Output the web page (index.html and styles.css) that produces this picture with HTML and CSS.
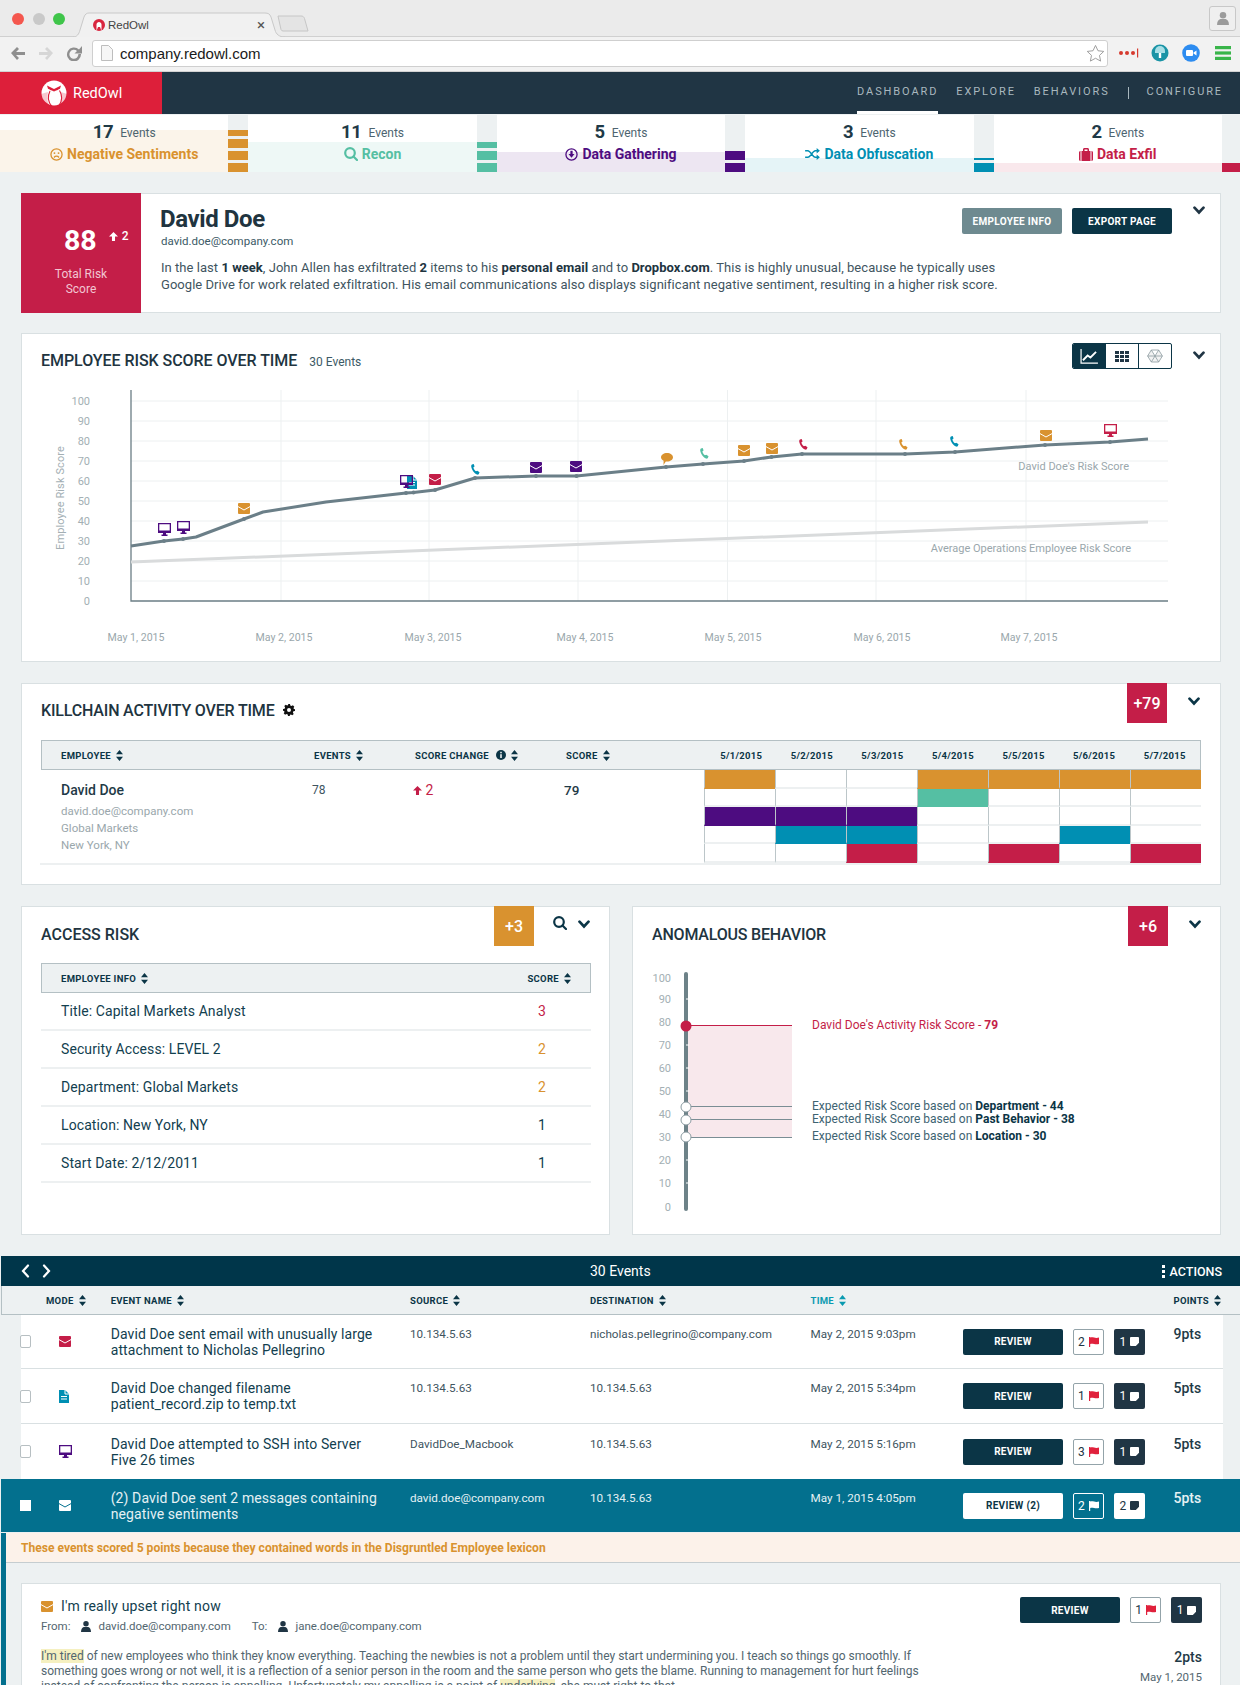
FILE: index.html
```html
<!DOCTYPE html>
<html lang="en">
<head>
<meta charset="utf-8">
<title>RedOwl</title>
<link rel="stylesheet" href="styles.css">
</head>
<body>
<svg class="defs" width="0" height="0" aria-hidden="true">
  <symbol id="i-mail" viewBox="0 0 12 11"><path d="M1 0h10a1 1 0 0 1 1 1v9a1 1 0 0 1-1 1H1a1 1 0 0 1-1-1V1a1 1 0 0 1 1-1z"/><path class="cut" d="M0 3.6l6 3.4 6-3.4"/></symbol>
  <symbol id="i-monitor" viewBox="0 0 13 13"><path d="M0 0h13v10H8v1.5h1.5V13h-6v-1.5H5V10H0zM1.3 1.3v6.2h10.4V1.3z"/></symbol>
  <symbol id="i-phone" viewBox="0 0 10 12"><path d="M1 .5L3 0l1 2.6-1.3 1c.2 1.700 1.300 3.500 2.800 4.400L7 7.300 9.500 9l-.8 2c-.4.6-1.200 1-2 .6C3.500 10.200.6 6.200.2 2.400.2 1.500.4.900 1 .5z"/></symbol>
  <symbol id="i-doc" viewBox="0 0 10 13"><path d="M0 0h6l4 4v9H0zM2 6v1h6V6zm0 2.500v1h6v-1z" fill-rule="evenodd"/><path class="cut" d="M6 0v4h4"/></symbol>
  <symbol id="i-bubble" viewBox="0 0 12 12"><path d="M6 0c3.300 0 6 1.900 6 4.300S9.300 8.600 6 8.600c-.4 0-.8 0-1.200-.1L2.500 12l.1-4.200C1 7.100 0 5.800 0 4.300 0 1.900 2.700 0 6 0z"/></symbol>
  <symbol id="i-flag" viewBox="0 0 10 10"><path d="M0 0h1.200v10H0zM1.200.6C4 -.4 6 1.800 10 .6v6.300c-4 1.200-6-1-8.800 0z"/></symbol>
  <symbol id="i-note" viewBox="0 0 10 10"><path d="M1 0h8a1 1 0 0 1 1 1v5.500L6.500 10H1a1 1 0 0 1-1-1V1a1 1 0 0 1 1-1z"/></symbol>
  <symbol id="i-sort" viewBox="0 0 7 11"><path d="M3.500 0L7 4.300H0zM0 6.700h7L3.500 11z"/></symbol>
  <symbol id="i-chev" viewBox="0 0 12 9"><path class="stroke stroke-chev" d="M1.500 1.700L6 6.500l4.500-4.800"/></symbol>
  <symbol id="i-user" viewBox="0 0 11 12"><circle cx="5.500" cy="3" r="3"/><path d="M0 12c0-3.500 1.500-5 3-5.500h5c1.500.5 3 2 3 5.500z"/></symbol>
  <symbol id="i-search" viewBox="0 0 14 14"><circle class="stroke" cx="6" cy="6" r="4.800"/><path class="stroke" d="M9.500 9.500L13 13"/></symbol>
  <symbol id="i-up" viewBox="0 0 10 10"><path d="M5 0l5 5H6.700v5H3.300V5H0z"/></symbol>
</svg>

<header class="browser">
  <div class="tabstrip">
    <div class="lights"><i class="light light-r"></i><i class="light light-g"></i><i class="light light-v"></i></div>
    <div class="tab">
      <svg class="tab-shape" viewBox="0 0 212 25" width="212" height="25"><path d="M0 25C4 25 6 22 7 18L11 5C12 2 14 1 16 1H192C195 1 197 2 198 5L202 18C203 22 206 25 212 25" /></svg>
      <svg class="fav" viewBox="0 0 12 12" width="12" height="12"><circle cx="6" cy="6" r="6" fill="#d9263f"/><path d="M3.500 12V5.500C3.500 4 4.800 3 6 3s2.500 1 2.500 2.500V12L7 8H5z" fill="#fff"/></svg>
      <span class="tab-title">RedOwl</span>
      <span class="tab-x">&#215;</span>
    </div>
    <svg class="newtab" viewBox="0 0 32 17" width="32" height="17"><path d="M1 1H24C26 1 27 2 27.500 3.500L31 16H6C5 16 4.500 15.500 4 14.500Z"/></svg>
    <div class="profile"><svg viewBox="0 0 11 12" width="12" height="13"><use href="#i-user"/></svg></div>
  </div>
  <div class="toolbar">
    <svg class="tb-nav" viewBox="0 0 72 16" width="72" height="16">
      <path class="tb-back" d="M1 8l6-6 2 2-3 3h9v3H6l3 3-2 2z"/>
      <path class="tb-fwd" d="M43 8l-6-6-2 2 3 3h-9v3h9l-3 3 2 2z"/>
      <path class="tb-reload" d="M69 4.500A7 7 0 1 0 71 9h-2.600A4.500 4.500 0 1 1 67 6l-2.500 2.500H72V1z"/>
    </svg>
    <div class="omnibox">
      <svg class="file" viewBox="0 0 12 16" width="12" height="16"><path d="M.5.500h7l4 4v11H.5z"/></svg>
      <span class="url">company.redowl.com</span>
      <svg class="star" viewBox="0 0 20 20" width="19" height="19"><path d="M10 1.500l2.600 5.600 6.100.7-4.500 4.200 1.200 6L10 15l-5.400 3 1.200-6L1.300 7.800l6.100-.7z"/></svg>
    </div>
    <svg class="ext" viewBox="0 0 114 20" width="114" height="20">
      <g fill="#d63a2f"><circle cx="3" cy="10" r="2"/><circle cx="9" cy="10" r="2"/><circle cx="15" cy="10" r="2"/><rect x="19" y="5.500" width="1.200" height="9"/></g>
      <circle cx="42" cy="10" r="8.500" fill="#1a94a6"/><path d="M37 10V8a5 5 0 0 1 10 0v2z" fill="#a8dfe6"/><rect x="40.800" y="10" width="2.400" height="5" fill="#fff"/>
      <circle cx="73" cy="10" r="8.800" fill="#2d8cf0"/><rect x="68" y="7" width="7" height="6" rx="1" fill="#fff"/><path d="M75.500 9.500l3-2v5l-3-2z" fill="#fff"/>
      <g fill="#39b54a"><rect x="97" y="3" width="16" height="3.200"/><rect x="97" y="8.400" width="16" height="3.200"/><rect x="97" y="13.800" width="16" height="3.200"/></g>
    </svg>
  </div>
</header>

<nav class="topnav">
  <div class="brand">
    <svg class="owl" viewBox="0 0 26 27" width="26" height="27">
      <circle cx="13" cy="13" r="12.500" fill="#fff"/>
      <path d="M6 5.500L13 9l7-3.500-1 3.200L13 11.500 7 8.700z" fill="#dd1f3a"/>
      <path class="owl-line" d="M9 11c-2.500 5-2 11 2 15.500M18.500 10.500c3 5 3 10-.5 15"/>
      <path d="M0 14c.5 6 4.500 11 9 12.500C6 23 6 18 7 12zM26 14c-.5 6-4 11-7.500 12.500C21 22 21.500 17 20 12z" fill="#dd1f3a" opacity=".25"/>
      <circle cx="10" cy="9.500" r=".8" fill="#dd1f3a"/><circle cx="16" cy="9.500" r=".8" fill="#dd1f3a"/>
    </svg>
    <span class="brand-name">RedOwl</span>
  </div>
  <ul class="navlinks">
    <li class="navlink is-active">DASHBOARD</li>
    <li class="navlink">EXPLORE</li>
    <li class="navlink">BEHAVIORS</li>
    <li class="navsep"></li>
    <li class="navlink">CONFIGURE</li>
  </ul>
</nav>

<section class="chain">
  <div class="stage c-orange">
    <div class="stage-body"><div class="stage-tint t-h42"></div>
      <div class="stage-count"><b>17</b><span>Events</span></div>
      <div class="stage-label"><svg viewBox="0 0 14 14" width="13" height="13"><circle class="stroke-thin" cx="7" cy="7" r="6"/><circle cx="4.800" cy="5.500" r="1"/><circle cx="9.200" cy="5.500" r="1"/><path class="stroke-thin" d="M4.300 10.200c1.500-1.800 3.900-1.800 5.400 0"/></svg>Negative Sentiments</div>
    </div>
    <div class="stage-bar"><i class="seg seg-s"></i><i class="seg"></i><i class="seg"></i><i class="seg"></i></div>
  </div>
  <div class="stage c-green">
    <div class="stage-body"><div class="stage-tint t-h30"></div>
      <div class="stage-count"><b>11</b><span>Events</span></div>
      <div class="stage-label"><svg viewBox="0 0 14 14" width="14" height="14"><use href="#i-search"/></svg>Recon</div>
    </div>
    <div class="stage-bar"><i class="seg seg-s"></i><i class="seg"></i><i class="seg"></i></div>
  </div>
  <div class="stage c-purple">
    <div class="stage-body"><div class="stage-tint t-h20"></div>
      <div class="stage-count"><b>5</b><span>Events</span></div>
      <div class="stage-label"><svg viewBox="0 0 14 14" width="13" height="13"><circle class="stroke-thin" cx="7" cy="7" r="6"/><path d="M5.800 3h2.400v3.500h2L7 10.500 3.800 6.500h2z"/></svg>Data Gathering</div>
    </div>
    <div class="stage-bar"><i class="seg"></i><i class="seg"></i></div>
  </div>
  <div class="stage c-teal">
    <div class="stage-body"><div class="stage-tint t-h14"></div>
      <div class="stage-count"><b>3</b><span>Events</span></div>
      <div class="stage-label"><svg viewBox="0 0 16 13" width="15" height="12"><path class="stroke-thin" d="M0 3h3c3 0 5 7 8 7h2M0 10h3c3 0 5-7 8-7h2"/><path d="M12.500 0L16 3l-3.500 3zM12.500 7l3.500 3-3.500 3z"/></svg>Data Obfuscation</div>
    </div>
    <div class="stage-bar"><i class="seg seg-xs"></i><i class="seg"></i></div>
  </div>
  <div class="stage c-red">
    <div class="stage-body"><div class="stage-tint t-h9"></div>
      <div class="stage-count"><b>2</b><span>Events</span></div>
      <div class="stage-label"><svg viewBox="0 0 14 13" width="14" height="13"><path d="M4 3V1.500C4 .6 4.600 0 5.500 0h3C9.400 0 10 .6 10 1.500V3h1.500v10h-9V3zm1.500 0h3V1.400h-3zM0 4.500C0 3.700.7 3 1.500 3v10C.7 13 0 12.300 0 11.500zM12.500 3c.8 0 1.500.7 1.500 1.500v7c0 .8-.7 1.500-1.500 1.500z"/></svg>Data Exfil</div>
    </div>
    <div class="stage-bar"><i class="seg"></i></div>
  </div>
</section>

<main class="page">
  <section class="card summary">
    <div class="riskbox">
      <div class="risk-top"><span class="risk-num">88</span><span class="risk-delta"><svg viewBox="0 0 10 10" width="9" height="9"><use href="#i-up"/></svg>2</span></div>
      <div class="risk-cap">Total Risk<br>Score</div>
    </div>
    <div class="summary-body">
      <div class="summary-head">
        <div>
          <h1 class="person">David Doe</h1>
          <div class="person-mail">david.doe@company.com</div>
        </div>
        <div class="summary-actions">
          <span class="btn btn-gray">EMPLOYEE INFO</span>
          <span class="btn btn-dark">EXPORT PAGE</span>
          <svg class="chev chev-s" viewBox="0 0 12 9" width="12" height="9"><use href="#i-chev"/></svg>
        </div>
      </div>
      <p class="summary-text">In the last <b>1 week</b>, John Allen has exfiltrated <b>2</b> items to his <b>personal email</b> and to <b>Dropbox.com</b>. This is highly unusual, because he typically uses<br>Google Drive for work related exfiltration. His email communications also displays significant negative sentiment, resulting in a higher risk score.</p>
    </div>
  </section>

  <section class="card riskchart">
    <div class="card-head head-chart">
      <h2 class="card-title title-risk">EMPLOYEE RISK SCORE OVER TIME</h2><span class="title-sub">30 Events</span>
      <div class="toggle">
        <span class="tg tg-on"><svg viewBox="0 0 20 16" width="19" height="15"><path class="tg-axis" d="M1 0v15h18"/><path class="tg-line" d="M3 12l5-5 3 2 6-6"/></svg></span>
        <span class="tg"><svg class="tg-grid" viewBox="0 0 14 11" width="14" height="11"><rect width="4" height="3"/><rect x="5" width="4" height="3"/><rect x="10" width="4" height="3"/><rect y="4" width="4" height="3"/><rect x="5" y="4" width="4" height="3"/><rect x="10" y="4" width="4" height="3"/><rect y="8" width="4" height="3"/><rect x="5" y="8" width="4" height="3"/><rect x="10" y="8" width="4" height="3"/></svg></span>
        <span class="tg"><svg class="tg-hex" viewBox="0 0 16 14" width="16" height="14"><path d="M4.300 1h7.400L15.400 7l-3.700 6H4.300L.6 7zM4.300 1L8 7l3.700-6M.6 7h14.800M4.300 13L8 7l3.700 6"/></svg></span>
      </div>
      <svg class="chev chev-s" viewBox="0 0 12 9" width="12" height="9"><use href="#i-chev"/></svg>
    </div>
    <svg class="plot" viewBox="22 380 1197 281" width="1197" height="281">
      <g class="gridlines">
        <path d="M131 401H1168M131 421H1168M131 441H1168M131 461H1168M131 481H1168M131 501H1168M131 521H1168M131 541H1168M131 561H1168M131 581H1168"/>
        <path d="M281 390V601M429 390V601M578 390V601M727.500 390V601M876 390V601M1026 390V601"/>
      </g>
      <path class="axis" d="M131 390V601H1168"/>
      <g class="ylab">
        <text x="90" y="405">100</text><text x="90" y="425">90</text><text x="90" y="445">80</text><text x="90" y="465">70</text><text x="90" y="485">60</text><text x="90" y="505">50</text><text x="90" y="525">40</text><text x="90" y="545">30</text><text x="90" y="565">20</text><text x="90" y="585">10</text><text x="90" y="605">0</text>
      </g>
      <text class="ytitle" transform="translate(64 498) rotate(-90)">Employee Risk Score</text>
      <g class="xlab">
        <text x="136" y="641">May 1, 2015</text><text x="284" y="641">May 2, 2015</text><text x="433" y="641">May 3, 2015</text><text x="585" y="641">May 4, 2015</text><text x="733" y="641">May 5, 2015</text><text x="882" y="641">May 6, 2015</text><text x="1029" y="641">May 7, 2015</text>
      </g>
      <path class="avg" d="M131 562L1148 522"/>
      <path class="score" d="M131 546L164 541L183 539L196 537L244 519L263 512L326 502L406 493L413.500 492.500L435 490L475 478L536 476L576.500 476L666 467L703 464L744 461L771.500 457L802 454L905 454L955 452L1045 445L1110 442L1148 439"/>
      <g class="pts">
        <circle cx="164" cy="541" r="2"/><circle cx="183" cy="539" r="2"/><circle cx="244" cy="519" r="2"/><circle cx="406" cy="493" r="2"/><circle cx="413.500" cy="492.500" r="2"/><circle cx="435" cy="490" r="2"/><circle cx="475" cy="478" r="2"/><circle cx="536" cy="476" r="2"/><circle cx="576.500" cy="476" r="2"/><circle cx="666" cy="467" r="2"/><circle cx="703" cy="464" r="2"/><circle cx="744" cy="461" r="2"/><circle cx="771.500" cy="457" r="2"/><circle cx="802" cy="454" r="2"/><circle cx="905" cy="454" r="2"/><circle cx="955" cy="452" r="2"/><circle cx="1045" cy="445" r="2"/><circle cx="1110" cy="442" r="2"/>
      </g>
      <g class="marks">
        <use class="m-purple" href="#i-monitor" x="158" y="523" width="13" height="13"/>
        <use class="m-purple" href="#i-monitor" x="177" y="521" width="13" height="13"/>
        <use class="m-orange" href="#i-mail" x="238" y="503" width="12" height="11"/>
        <use class="m-teal" href="#i-doc" x="407" y="476" width="10" height="13"/>
        <use class="m-purple" href="#i-monitor" x="400" y="475" width="13" height="13"/>
        <use class="m-red" href="#i-mail" x="429" y="474" width="12" height="11"/>
        <use class="m-teal" href="#i-phone" x="471" y="464" width="9" height="11"/>
        <use class="m-purple" href="#i-mail" x="530" y="462" width="12" height="11"/>
        <use class="m-purple" href="#i-mail" x="570" y="461" width="12" height="11"/>
        <use class="m-orange" href="#i-bubble" x="661" y="453" width="12" height="12"/>
        <use class="m-green" href="#i-phone" x="700" y="448" width="9" height="11"/>
        <use class="m-orange" href="#i-mail" x="738" y="445" width="12" height="11"/>
        <use class="m-orange" href="#i-mail" x="766" y="443" width="12" height="11"/>
        <use class="m-red" href="#i-phone" x="799" y="439" width="9" height="11"/>
        <use class="m-orange" href="#i-phone" x="899" y="439" width="9" height="11"/>
        <use class="m-teal" href="#i-phone" x="950" y="436" width="9" height="11"/>
        <use class="m-orange" href="#i-mail" x="1040" y="430" width="12" height="11"/>
        <use class="m-red" href="#i-monitor" x="1104" y="424" width="13" height="13"/>
      </g>
      <text class="lab" x="1129" y="470">David Doe's Risk Score</text>
      <text class="lab" x="1131" y="552">Average Operations Employee Risk Score</text>
    </svg>
  </section>

  <section class="card killchain">
    <div class="card-head head-kill">
      <h2 class="card-title title-kill">KILLCHAIN ACTIVITY OVER TIME</h2>
      <svg class="gear" viewBox="0 0 12 12" width="12" height="12"><path d="M5 0h2l.3 1.600 1.200.5L9.900 1.300l1.400 1.400-.8 1.400.5 1.200L12 5v2l-1.600.3-.5 1.200.8 1.400-1.400 1.400-1.400-.8-1.200.5L7 12H5l-.3-1.600-1.200-.5-1.400.8-1.400-1.400.8-1.400-.5-1.200L0 7V5l1.600-.3.5-1.200-.8-1.400 1.400-1.400 1.400.8 1.200-.5zM6 4a2 2 0 1 0 0 4 2 2 0 0 0 0-4z" fill-rule="evenodd"/></svg>
      <span class="badge b-red">+79</span>
      <svg class="chev chev-t" viewBox="0 0 12 9" width="12" height="9"><use href="#i-chev"/></svg>
    </div>
    <div class="kill-table">
      <div class="kill-grid thead">
        <span class="th th-first">EMPLOYEE <svg class="sort" viewBox="0 0 7 11" width="7" height="11"><use href="#i-sort"/></svg></span>
        <span class="th">EVENTS <svg class="sort" viewBox="0 0 7 11" width="7" height="11"><use href="#i-sort"/></svg></span>
        <span class="th">SCORE CHANGE <svg class="info" viewBox="0 0 10 10" width="10" height="10"><circle cx="5" cy="5" r="5"/><rect class="info-i" x="4.200" y="4.200" width="1.600" height="3.800"/><rect class="info-i" x="4.200" y="1.800" width="1.600" height="1.500"/></svg> <svg class="sort" viewBox="0 0 7 11" width="7" height="11"><use href="#i-sort"/></svg></span>
        <span class="th">SCORE <svg class="sort" viewBox="0 0 7 11" width="7" height="11"><use href="#i-sort"/></svg></span>
        <span class="th th-date">5/1/2015</span><span class="th th-date">5/2/2015</span><span class="th th-date">5/3/2015</span><span class="th th-date">5/4/2015</span><span class="th th-date">5/5/2015</span><span class="th th-date">5/6/2015</span><span class="th th-date">5/7/2015</span>
      </div>
      <div class="kill-grid kill-row">
        <div class="kill-emp">
          <div class="emp-name">David Doe</div>
          <div class="emp-meta">david.doe@company.com<br>Global Markets<br>New York, NY</div>
        </div>
        <div class="kill-num">78</div>
        <div class="kill-delta"><svg viewBox="0 0 10 10" width="9" height="9"><use href="#i-up"/></svg> 2</div>
        <div class="kill-score">79</div>
        <div class="heat">
          <i class="h h-o"></i><i class="h"></i><i class="h"></i><i class="h h-o"></i><i class="h h-o"></i><i class="h h-o"></i><i class="h h-o"></i>
          <i class="h"></i><i class="h"></i><i class="h"></i><i class="h h-g"></i><i class="h"></i><i class="h"></i><i class="h"></i>
          <i class="h h-p"></i><i class="h h-p"></i><i class="h h-p"></i><i class="h"></i><i class="h"></i><i class="h"></i><i class="h"></i>
          <i class="h"></i><i class="h h-t"></i><i class="h h-t"></i><i class="h"></i><i class="h"></i><i class="h h-t"></i><i class="h"></i>
          <i class="h"></i><i class="h"></i><i class="h h-r"></i><i class="h"></i><i class="h h-r"></i><i class="h"></i><i class="h h-r"></i>
        </div>
      </div>
    </div>
  </section>

  <div class="pair">
    <section class="card access">
      <div class="card-head head-pair">
        <h2 class="card-title">ACCESS RISK</h2>
        <span class="badge b-orange">+3</span>
        <svg class="search" viewBox="0 0 14 14" width="14" height="14"><use href="#i-search"/></svg>
        <svg class="chev chev-a" viewBox="0 0 12 9" width="12" height="9"><use href="#i-chev"/></svg>
      </div>
      <div class="acc-table">
        <div class="acc-head thead">
          <span class="th th-first">EMPLOYEE INFO <svg class="sort" viewBox="0 0 7 11" width="7" height="11"><use href="#i-sort"/></svg></span>
          <span class="th th-score">SCORE <svg class="sort" viewBox="0 0 7 11" width="7" height="11"><use href="#i-sort"/></svg></span>
        </div>
        <div class="acc-row"><span>Title: Capital Markets Analyst</span><b class="s-red">3</b></div>
        <div class="acc-row"><span>Security Access: LEVEL 2</span><b class="s-orange">2</b></div>
        <div class="acc-row"><span>Department: Global Markets</span><b class="s-orange">2</b></div>
        <div class="acc-row"><span>Location: New York, NY</span><b>1</b></div>
        <div class="acc-row"><span>Start Date: 2/12/2011</span><b>1</b></div>
      </div>
    </section>
    <section class="card anomaly">
      <div class="card-head head-pair">
        <h2 class="card-title title-anom">ANOMALOUS BEHAVIOR</h2>
        <span class="badge b-red">+6</span>
        <svg class="chev chev-b" viewBox="0 0 12 9" width="12" height="9"><use href="#i-chev"/></svg>
      </div>
      <svg class="anom" viewBox="632 963 587 270" width="587" height="270">
        <rect class="an-fill" x="685" y="1026" width="106" height="111"/>
        <path class="an-rail" d="M685 974V1209"/>
        <path class="an-tick" d="M685 999h3M685 1045h3M685 1068h3M685 1091h3M685 1160h3M685 1183h3"/>
        <path class="an-red" d="M685 1025.500H791"/>
        <path class="an-gray" d="M685 1106.500H791M685 1119.500H791M685 1137.500H791"/>
        <circle class="dot-red" cx="685" cy="1026" r="5.500"/>
        <circle class="dot-w" cx="685" cy="1107" r="5"/><circle class="dot-w" cx="685" cy="1120" r="5"/><circle class="dot-w" cx="685" cy="1137" r="5"/>
        <g class="an-y">
          <text x="670" y="982">100</text><text x="670" y="1003">90</text><text x="670" y="1026">80</text><text x="670" y="1049">70</text><text x="670" y="1072">60</text><text x="670" y="1095">50</text><text x="670" y="1118">40</text><text x="670" y="1141">30</text><text x="670" y="1164">20</text><text x="670" y="1187">10</text><text x="670" y="1211">0</text>
        </g>
        <text class="an-t an-t-red" x="811" y="1029">David Doe's Activity Risk Score - <tspan class="an-b">79</tspan></text>
        <text class="an-t" x="811" y="1110">Expected Risk Score based on <tspan class="an-b">Department - 44</tspan></text>
        <text class="an-t" x="811" y="1123">Expected Risk Score based on <tspan class="an-b">Past Behavior - 38</tspan></text>
        <text class="an-t" x="811" y="1140">Expected Risk Score based on <tspan class="an-b">Location - 30</tspan></text>
      </svg>
    </section>
  </div>
</main>

<section class="events">
  <div class="ev-bar">
    <div class="ev-pager">
      <svg viewBox="0 0 9 14" width="9" height="14"><path class="stroke" d="M7 1.500L2 7l5 5.500"/></svg>
      <svg viewBox="0 0 9 14" width="9" height="14"><path class="stroke" d="M2 1.500L7 7l-5 5.500"/></svg>
    </div>
    <span class="ev-count">30 Events</span>
    <span class="ev-actions"><svg viewBox="0 0 3 13" width="3" height="13"><rect width="3" height="3"/><rect y="5" width="3" height="3"/><rect y="10" width="3" height="3"/></svg>ACTIONS</span>
  </div>
  <div class="ev-grid ev-head thead">
    <span></span>
    <span class="th">MODE <svg class="sort" viewBox="0 0 7 11" width="7" height="11"><use href="#i-sort"/></svg></span>
    <span class="th">EVENT NAME <svg class="sort" viewBox="0 0 7 11" width="7" height="11"><use href="#i-sort"/></svg></span>
    <span class="th">SOURCE <svg class="sort" viewBox="0 0 7 11" width="7" height="11"><use href="#i-sort"/></svg></span>
    <span class="th">DESTINATION <svg class="sort" viewBox="0 0 7 11" width="7" height="11"><use href="#i-sort"/></svg></span>
    <span class="th th-active">TIME <svg class="sort" viewBox="0 0 7 11" width="7" height="11"><use href="#i-sort"/></svg></span>
    <span></span>
    <span class="th">POINTS <svg class="sort" viewBox="0 0 7 11" width="7" height="11"><use href="#i-sort"/></svg></span>
  </div>

  <div class="ev-grid ev-row r-54">
    <i class="check"></i>
    <svg class="mode m-red" viewBox="0 0 12 11" width="12" height="11"><use href="#i-mail"/></svg>
    <div class="ev-name">David Doe sent email with unusually large<br>attachment to Nicholas Pellegrino</div>
    <div class="ev-cell">10.134.5.63</div>
    <div class="ev-cell">nicholas.pellegrino@company.com</div>
    <div class="ev-cell">May 2, 2015 9:03pm</div>
    <div class="ev-acts">
      <span class="btn btn-dark btn-review">REVIEW</span>
      <span class="cnt cnt-flag">2 <svg viewBox="0 0 10 10" width="10" height="10"><use href="#i-flag"/></svg></span>
      <span class="cnt cnt-note">1 <svg viewBox="0 0 10 10" width="9" height="9"><use href="#i-note"/></svg></span>
    </div>
    <div class="ev-pts">9pts</div>
  </div>
  <div class="ev-grid ev-row r-55">
    <i class="check"></i>
    <svg class="mode m-teal" viewBox="0 0 10 13" width="10" height="13"><use href="#i-doc"/></svg>
    <div class="ev-name">David Doe changed filename<br>patient_record.zip to temp.txt</div>
    <div class="ev-cell">10.134.5.63</div>
    <div class="ev-cell">10.134.5.63</div>
    <div class="ev-cell">May 2, 2015 5:34pm</div>
    <div class="ev-acts">
      <span class="btn btn-dark btn-review">REVIEW</span>
      <span class="cnt cnt-flag">1 <svg viewBox="0 0 10 10" width="10" height="10"><use href="#i-flag"/></svg></span>
      <span class="cnt cnt-note">1 <svg viewBox="0 0 10 10" width="9" height="9"><use href="#i-note"/></svg></span>
    </div>
    <div class="ev-pts">5pts</div>
  </div>
  <div class="ev-grid ev-row r-55 ev-last">
    <i class="check"></i>
    <svg class="mode m-purple" viewBox="0 0 13 13" width="13" height="13"><use href="#i-monitor"/></svg>
    <div class="ev-name">David Doe attempted to SSH into Server<br>Five 26 times</div>
    <div class="ev-cell">DavidDoe_Macbook</div>
    <div class="ev-cell">10.134.5.63</div>
    <div class="ev-cell">May 2, 2015 5:16pm</div>
    <div class="ev-acts">
      <span class="btn btn-dark btn-review">REVIEW</span>
      <span class="cnt cnt-flag">3 <svg viewBox="0 0 10 10" width="10" height="10"><use href="#i-flag"/></svg></span>
      <span class="cnt cnt-note">1 <svg viewBox="0 0 10 10" width="9" height="9"><use href="#i-note"/></svg></span>
    </div>
    <div class="ev-pts">5pts</div>
  </div>
  <div class="ev-grid ev-row ev-sel">
    <i class="check check-on"></i>
    <svg class="mode" viewBox="0 0 12 11" width="12" height="11"><use href="#i-mail"/></svg>
    <div class="ev-name">(2) David Doe sent 2 messages containing<br>negative sentiments</div>
    <div class="ev-cell">david.doe@company.com</div>
    <div class="ev-cell">10.134.5.63</div>
    <div class="ev-cell">May 1, 2015 4:05pm</div>
    <div class="ev-acts">
      <span class="btn btn-white btn-review">REVIEW (2)</span>
      <span class="cnt cnt-flag">2 <svg viewBox="0 0 10 10" width="10" height="10"><use href="#i-flag"/></svg></span>
      <span class="cnt cnt-note">2 <svg viewBox="0 0 10 10" width="9" height="9"><use href="#i-note"/></svg></span>
    </div>
    <div class="ev-pts">5pts</div>
  </div>
  <div class="detail">
    <div class="lexicon">These events scored 5 points because they contained words in the Disgruntled Employee lexicon</div>
    <article class="card email">
      <div class="email-head">
        <div>
          <div class="email-subject"><svg viewBox="0 0 12 11" width="12" height="11"><use href="#i-mail"/></svg>I'm really upset right now</div>
          <div class="email-meta">
            <span>From:</span><svg viewBox="0 0 11 12" width="10" height="11"><use href="#i-user"/></svg><span>david.doe@company.com</span>
            <span class="email-to">To:</span><svg viewBox="0 0 11 12" width="10" height="11"><use href="#i-user"/></svg><span>jane.doe@company.com</span>
          </div>
        </div>
        <div class="ev-acts">
          <span class="btn btn-dark btn-review">REVIEW</span>
          <span class="cnt cnt-flag">1 <svg viewBox="0 0 10 10" width="10" height="10"><use href="#i-flag"/></svg></span>
          <span class="cnt cnt-note">1 <svg viewBox="0 0 10 10" width="9" height="9"><use href="#i-note"/></svg></span>
        </div>
      </div>
      <div class="email-body">
        <p class="email-text"><mark>I'm tired</mark> of new employees who think they know everything. Teaching the newbies is not a problem until they start undermining you. I teach so things go smoothly. If<br>something goes wrong or not well, it is a reflection of a senior person in the room and the same person who gets the blame. Running to management for hurt feelings<br>instead of confronting the person is appalling. Unfortunately my appalling is a point of <mark>underlying</mark>, she must right to that.</p>
        <div class="email-side"><div class="email-pts">2pts</div><div class="email-date">May 1, 2015</div></div>
      </div>
    </article>
  </div>
</section>
</body>
</html>
```

FILE: styles.css
```css
* { box-sizing: border-box; }
html, body { margin: 0; padding: 0; }
body {
  width: 1240px;
  height: 1685px;
  overflow: hidden;
  background: #edf1f2;
  font-family: Roboto, "Liberation Sans", sans-serif;
  color: #1f3a47;
}
.defs { position: absolute; }
.cut { fill: none; stroke: var(--cut, #fff); stroke-width: 1; }
.stroke { fill: none; stroke: currentColor; stroke-width: 2.2; stroke-linecap: round; }
.stroke-chev { stroke-width: 2.7; }
.stroke-thin { fill: none; stroke: currentColor; stroke-width: 1.4; }
svg { fill: currentColor; flex: none; }

/* browser */
.browser { height: 72px; }
.tabstrip { height: 37px; background: #ebebeb; border-bottom: 1px solid #d0d0d0; display: flex; align-items: flex-end; position: relative; }
.lights { display: flex; gap: 8.500px; padding-left: 12px; align-self: flex-start; padding-top: 13px; width: 75px; }
.light { width: 12px; height: 12px; border-radius: 50%; flex: none; }
.light-r { background: #f4574e; }
.light-g { background: #c9c9c9; }
.light-v { background: #3fc54a; }
.tab { width: 205px; height: 25px; position: relative; display: flex; align-items: center; padding-left: 18px; margin-bottom: -1px; font-size: 11.500px; color: #444; }
.tab-shape { position: absolute; left: -2px; top: 0; fill: #f1f1f1; stroke: #c9c9c9; }
.fav { position: relative; }
.tab-title { position: relative; margin-left: 3px; width: 149px; font-family: "Liberation Sans", sans-serif; }
.tab-x { position: relative; font-size: 15px; color: #555; }
.newtab { fill: #e4e4e4; stroke: #c6c6c6; margin-left: -3px; margin-bottom: 4px; }
.profile { position: absolute; right: 4px; top: 6px; width: 27px; height: 25px; border: 1px solid #c8c8c8; border-radius: 3px; background: #efefef; display: flex; align-items: center; justify-content: center; color: #9b9b9b; }
.toolbar { height: 35px; background: #f2f2f2; border-bottom: 1px solid #d2d2d2; display: flex; align-items: center; padding: 0 0 2px 10px; }
.tb-nav { width: 72px; }
.tb-back { fill: #8f8f8f; }
.tb-fwd { fill: #d6d6d6; }
.tb-reload { fill: #8f8f8f; }
.omnibox { width: 1016px; height: 27px; margin-left: 10px; background: #fff; border: 1px solid #cfcfcf; border-radius: 3px; display: flex; align-items: center; padding-left: 8px; font-family: "Liberation Sans", sans-serif; font-size: 15px; color: #1a1a1a; }
.file { fill: #f6f6f6; stroke: #bdbdbd; }
.url { margin-left: 7px; width: 966px; }
.star { fill: #fff; stroke: #9b9b9b; }
.ext { margin-left: 10px; }

/* nav */
.topnav { height: 42px; background: #203544; display: flex; justify-content: space-between; }
.brand { width: 162px; background: #dd1f3a; display: flex; align-items: center; padding-left: 41px; gap: 6px; }
.owl-line { fill: none; stroke: #dd1f3a; stroke-width: 1.100; }
.brand-name { color: #fff; font-size: 14.500px; }
.navlinks { list-style: none; margin: 0; padding: 0 17px 0 0; display: flex; align-items: center; height: 42px; }
.navlink { font-size: 11px; letter-spacing: 1.900px; color: #a9b8bf; height: 42px; line-height: 40px; margin-left: 18px; white-space: nowrap; }
.navlink.is-active { border-bottom: 3px solid #fff; }
.navsep { width: 1px; height: 12px; background: #a9b8bf; margin-left: 18px; }

/* kill chain strip */
.chain { display: grid; grid-template-columns: repeat(5, 248.4px); height: 58px; padding-top: 1px; overflow: hidden; }
.stage { display: flex; --c: #000; }
.stage-body { width: 228.4px; background: #fff; position: relative; padding: 6px 0 0 20px; text-align: center; }
.stage-tint { position: absolute; left: 0; right: 0; bottom: 0; background: var(--c); opacity: .1; }
.t-h42 { height: 42px; }
.t-h30 { height: 30px; }
.t-h20 { height: 20px; }
.t-h14 { height: 14px; }
.t-h9 { height: 9px; }
.stage-count { position: relative; height: 22px; line-height: 22px; font-size: 12px; color: #4d6470; }
.stage-count b { font-size: 18.500px; font-weight: 700; letter-spacing: -.4px; color: #1f3a47; margin-right: 7px; vertical-align: -1px; }
.stage-label { position: relative; margin-top: 1px; height: 20px; line-height: 20px; font-size: 14px; font-weight: 700; color: var(--c); display: flex; justify-content: center; align-items: center; gap: 4px; }
.stage-bar { width: 20px; background: #edf1f2; display: flex; flex-direction: column; justify-content: flex-end; gap: 3px; }
.seg { height: 9px; background: var(--c); display: block; }
.seg-s { height: 6px; }
.seg-xs { height: 2px; }
.c-orange { --c: #d9922f; }
.c-green { --c: #55bfa3; }
.c-purple { --c: #4d0c80; }
.c-teal { --c: #008fb3; }
.c-red { --c: #c41e48; }

/* cards */
.page { width: 1200px; margin-left: 21px; }
.card { background: #fff; border: 1px solid #d9e0e2; }
.card-title { margin: 0; font-size: 16px; font-weight: 500; color: #21343f; white-space: nowrap; }
.title-risk { letter-spacing: -.05px; }
.title-kill { letter-spacing: -.17px; }
.title-anom { letter-spacing: -.2px; }
.card-head { display: flex; align-items: center; position: relative; }

.summary { margin-top: 21px; height: 120px; display: flex; }
.riskbox { width: 120px; height: 120px; margin: -1px 0 -1px -1px; background: #c41e48; color: #fff; padding-top: 30px; text-align: center; }
.risk-top { display: flex; height: 36px; padding-left: 43px; }
.risk-num { font-size: 28.500px; font-weight: 700; line-height: 36px; }
.risk-delta { font-size: 12px; font-weight: 500; margin-left: 12px; line-height: 26px; display: flex; align-items: center; gap: 4px; height: 26px; }
.risk-cap { margin-top: 8px; font-size: 12px; line-height: 15px; color: #f2c6d2; }
.summary-body { flex: 1; padding: 0 15px 0 19px; }
.summary-head { display: flex; justify-content: space-between; height: 57px; }
.person { margin: 12px 0 0; font-size: 24px; line-height: 27px; font-weight: 700; color: #21343f; letter-spacing: -.4px; }
.person-mail { font-size: 11.500px; line-height: 14px; margin: 1px 0 0 1px; color: #3c5a66; }
.summary-actions { display: flex; gap: 10px; padding-top: 14px; }
.btn { height: 26px; width: 100px; border-radius: 2px; display: flex; align-items: center; justify-content: center; font-size: 10px; font-weight: 700; letter-spacing: .3px; color: #fff; }
.btn-gray { background: #6e8a90; }
.btn-dark { background: #0b3546; }
.btn-white { background: #fff; color: #0b3546; }
.chev { color: #203544; }
.chev-s { margin: -2px 0 0 11px; }
.summary-text { margin: 8px 0 0 1px; font-size: 13px; letter-spacing: .04px; line-height: 17px; color: #41555f; white-space: nowrap; }
.summary-text b { color: #21343f; font-weight: 700; }

.riskchart { margin-top: 20px; height: 329px; }
.head-chart { height: 46px; padding: 9px 15px 0 19px; }
.head-chart .card-title { margin-top: -2px; }
.title-sub { font-size: 12px; margin: 0 0 0 12px; color: #3c5a66; }
.toggle { margin-left: auto; display: flex; width: 100px; height: 26px; border: 1px solid #0b3546; border-radius: 2px; overflow: hidden; align-self: flex-start; }
.tg { flex: 1; display: flex; align-items: center; justify-content: center; border-left: 1px solid #0b3546; }
.tg:first-child { border-left: 0; }
.tg-on { background: #0b3546; }
.tg-axis { fill: none; stroke: #fff; stroke-width: 1.300; }
.tg-line { fill: none; stroke: #fff; stroke-width: 2; }
.tg-grid { color: #203544; }
.tg-hex { fill: #f2f2f2; stroke: #8b9aa0; stroke-width: .8; }
.head-chart .chev-s { align-self: flex-start; margin: 8px 0 0 21px; }
.plot { display: block; }
.gridlines path { stroke: #edf0f1; stroke-width: 1; fill: none; }
.axis { fill: none; stroke: #6b7d85; stroke-width: 1.300; }
.ylab text { font-size: 11px; fill: #a3afb4; text-anchor: end; }
.ytitle { font-size: 11px; fill: #a3afb4; text-anchor: middle; letter-spacing: .1px; }
.xlab text { font-size: 10.600px; fill: #9aa7ac; text-anchor: middle; }
.avg { fill: none; stroke: #d9dbdc; stroke-width: 3; }
.score { fill: none; stroke: #6b7f88; stroke-width: 3; stroke-linejoin: round; }
.pts circle { fill: #6b7f88; }
.m-purple { color: #4d0c80; fill: #4d0c80; }
.m-orange { color: #d9922f; fill: #d9922f; }
.m-red { color: #c41e48; fill: #c41e48; }
.m-teal { color: #008fb3; fill: #008fb3; }
.m-green { color: #55bfa3; fill: #55bfa3; }
.lab { font-size: 11px; fill: #9aa7ac; text-anchor: end; }

.killchain { margin-top: 21px; height: 202px; }
.head-kill { height: 56px; padding: 0 19px; }
.head-kill .card-title { margin-top: -4px; }
.gear { margin: -4px 0 0 8px; color: #111; }
.badge { position: absolute; top: -1px; width: 40px; height: 40px; color: #fff; font-size: 16px; font-weight: 500; display: flex; align-items: center; justify-content: center; }
.b-red { background: #c41e48; }
.b-orange { background: #d9922f; }
.head-kill .badge { left: 1105px; }
.chev-t { position: absolute; left: 1166px; top: 13px; color: #0b3546; }
.kill-table { margin: 0 19px; }
.thead { background: #edf1f2; border: 1px solid #b4c0c4; }
.kill-grid { display: grid; grid-template-columns: 272px 101px 151px 140px repeat(7, 1fr); }
.kill-grid.thead { height: 30px; align-items: center; }
.th { font-size: 9.500px; font-weight: 700; letter-spacing: .3px; color: #0b3546; white-space: nowrap; display: flex; align-items: center; gap: 5px; }
.th-first { padding-left: 19px; }
.th-date { justify-content: center; }
.th-score { margin-left: auto; padding-right: 11px; }
.sort { color: #0b3546; }
.info { color: #0b3546; margin-left: 2px; }
.info-i { fill: #edf1f2; }
.kill-row { height: 95px; border-bottom: 2px solid #edf0f1; margin-left: -1px; }
.kill-emp { padding: 11px 0 0 21px; }
.emp-name { font-size: 14px; font-weight: 500; line-height: 18px; color: #1f3a47; }
.emp-meta { margin-top: 4px; font-size: 11.500px; line-height: 17px; color: #9aa7ac; }
.kill-num { padding-top: 11px; font-size: 12px; line-height: 18px; color: #41555f; }
.kill-delta { padding-top: 11px; font-size: 14px; line-height: 18px; color: #c41e48; }
.kill-score { padding-top: 11px; font-size: 13.500px; font-weight: 500; line-height: 18px; color: #1f3a47; }
.heat { grid-column: 5 / -1; display: grid; grid-template-columns: repeat(7, 1fr); grid-template-rows: repeat(5, 1fr); height: 93px; }
.h { display: block; border-left: 1px solid #bcc6c9; border-bottom: 2px solid #edf0f1; background: #fff; }
.h-o { background: #d9922f; border-color: #d9922f; border-left-color: #bcc6c9; }
.h-g { background: #55bfa3; border-color: #55bfa3; border-left-color: #bcc6c9; }
.h-p { background: #4d0c80; border-color: #4d0c80; border-left-color: #bcc6c9; }
.h-t { background: #008fb3; border-color: #008fb3; border-left-color: #bcc6c9; }
.h-r { background: #c41e48; border-color: #c41e48; border-left-color: #bcc6c9; }

.pair { margin-top: 21px; display: flex; justify-content: space-between; }
.access, .anomaly { width: 589px; height: 329px; }
.head-pair { height: 56px; padding: 0 19px; }
.head-pair .card-title { margin-top: -2px; }
.access .badge { left: 472px; }
.search { position: absolute; left: 531px; top: 9px; color: #0b3546; }
.chev-a { position: absolute; left: 556px; top: 13px; color: #0b3546; }
.anomaly .badge { left: 495px; }
.chev-b { position: absolute; left: 556px; top: 13px; color: #0b3546; }
.acc-table { margin: 0 18px 0 19px; }
.acc-head { display: flex; height: 30px; align-items: center; }
.acc-head .th-score { padding-right: 19px; }
.acc-row { display: flex; height: 38px; padding: 0 0 0 20px; margin-top: 0; border-bottom: 2px solid #edf0f1; align-items: center; font-size: 14px; color: #12404f; justify-content: space-between; }
.acc-row span { letter-spacing: .1px; }
.acc-row b { width: 53px; text-align: left; font-weight: 400; }
.s-red { color: #c41e48; }
.s-orange { color: #d9922f; }
.anom { display: block; margin-top: 0; }
.an-fill { fill: #f8e8ec; }
.an-rail { stroke: #6d8288; stroke-width: 4; stroke-linecap: round; fill: none; }
.an-tick { stroke: #fff; stroke-width: 1; fill: none; }
.an-red { stroke: #c41e48; stroke-width: 1; fill: none; }
.an-gray { stroke: #7a8d94; stroke-width: 1; fill: none; }
.dot-red { fill: #c41e48; }
.dot-w { fill: #fff; stroke: #8b9ba1; stroke-width: 1; }
.an-y text { font-size: 11px; fill: #a3afb4; text-anchor: end; }
.an-t { font-size: 12px; fill: #3d6372; }
.an-t-red { fill: #c41e48; }
.an-b { font-weight: 700; fill: #0b3546; }
.an-t-red .an-b { fill: #c41e48; }

/* events */
.events { margin: 21px 0 0 1px; width: 1239px; }
.ev-bar { height: 30px; background: #00364a; color: #fff; display: flex; align-items: center; padding: 0 18px 0 20px; position: relative; }
.ev-pager { display: flex; gap: 12px; width: 569px; }
.ev-count { font-size: 14px; flex: 1; }
.ev-actions { font-size: 12.500px; font-weight: 500; display: flex; align-items: center; gap: 5px; }
.ev-grid { display: grid; grid-template-columns: 25px 64.700px 299.300px 180px 220.500px 152.500px 210.500px 1fr; }
.ev-head { height: 29px; align-items: center; padding-left: 19px; padding-right: 17px; border-width: 0 0 1px 0; border-left: 1px solid #b4c0c4; }
.th-active { color: #0a9ab0; }
.th-active .sort { color: #0a9ab0; }
.ev-row { margin: 0 17px 0 20px; align-items: center; border-bottom: 1px solid #d9e0e2; background: #fff; }
.r-54 { height: 54px; }
.r-55 { height: 55px; }
.ev-last { border-bottom: 0; }
.check { width: 11px; height: 13px; margin-left: -1px; border: 1px solid #b7bfc2; border-radius: 2px; background: #fff; display: block; }
.mode { justify-self: start; margin-left: 13px; }
.ev-name { height: 32px; font-size: 14px; line-height: 16px; font-weight: 400; color: #12404f; white-space: nowrap; letter-spacing: .1px; }
.ev-cell { height: 32px; font-size: 11.700px; line-height: 16px; color: #41555f; white-space: nowrap; }
.ev-acts { display: flex; gap: 10px; }
.cnt { width: 31px; height: 26px; border-radius: 2px; display: flex; align-items: center; justify-content: center; gap: 4px; font-size: 12px; }
.cnt-flag { background: #fff; border: 1px solid #93a3a9; color: #203544; }
.cnt-flag svg { color: #e0213c; }
.cnt-note { background: #203544; color: #fff; }
.ev-pts { height: 32px; font-size: 14px; line-height: 16px; font-weight: 500; color: #1f3a47; }
.ev-sel { margin: 0; height: 53px; padding: 0 17px 0 20px; background: #03708e; border-bottom: 0; color: #fff; }
.ev-sel .check { background: #fff; border: 0; height: 11px; border-radius: 0; }
.ev-sel .mode { color: #fff; --cut: #03708e; }
.ev-sel .ev-name, .ev-sel .ev-cell, .ev-sel .ev-pts { color: #e5f1f4; }
.ev-sel .cnt-flag { background: transparent; border-color: #fff; color: #fff; }
.ev-sel .cnt-flag svg { color: #fff; }
.ev-sel .cnt-note { background: #fff; color: #203544; }
.detail { border-left: 5px solid #03708e; height: 200px; }
.lexicon { height: 30px; margin-top: 1px; background: #fcf2ea; border-bottom: 1px solid #c5cdd0; padding-left: 15px; font-size: 12.100px; font-weight: 700; line-height: 30px; color: #d9922f; white-space: nowrap; }
.email { margin: 20px 19px 0 15px; height: 130px; padding: 13px 18px 0 19px; }
.email-head { display: flex; justify-content: space-between; }
.email-subject { display: flex; align-items: center; gap: 8px; height: 18px; font-size: 14px; color: #12404f; letter-spacing: .2px; }
.email-subject svg { color: #d9922f; }
.email-meta { display: flex; align-items: center; gap: 7px; margin-top: 3px; font-size: 11.500px; color: #52666f; line-height: 16px; }
.email-meta svg { color: #203544; margin-left: 4px; }
.email-to { margin-left: 14px; }
.email-body { display: flex; justify-content: space-between; margin-top: 15px; }
.email-text { margin: 0; font-size: 12px; line-height: 15px; color: #52666f; white-space: nowrap; }
mark { background: #f5f0c0; color: inherit; }
.email-side { text-align: right; }
.email-pts { font-size: 14px; font-weight: 500; line-height: 16px; color: #1f3a47; }
.email-date { font-size: 11.500px; line-height: 16px; margin-top: 4px; color: #52666f; }
```
